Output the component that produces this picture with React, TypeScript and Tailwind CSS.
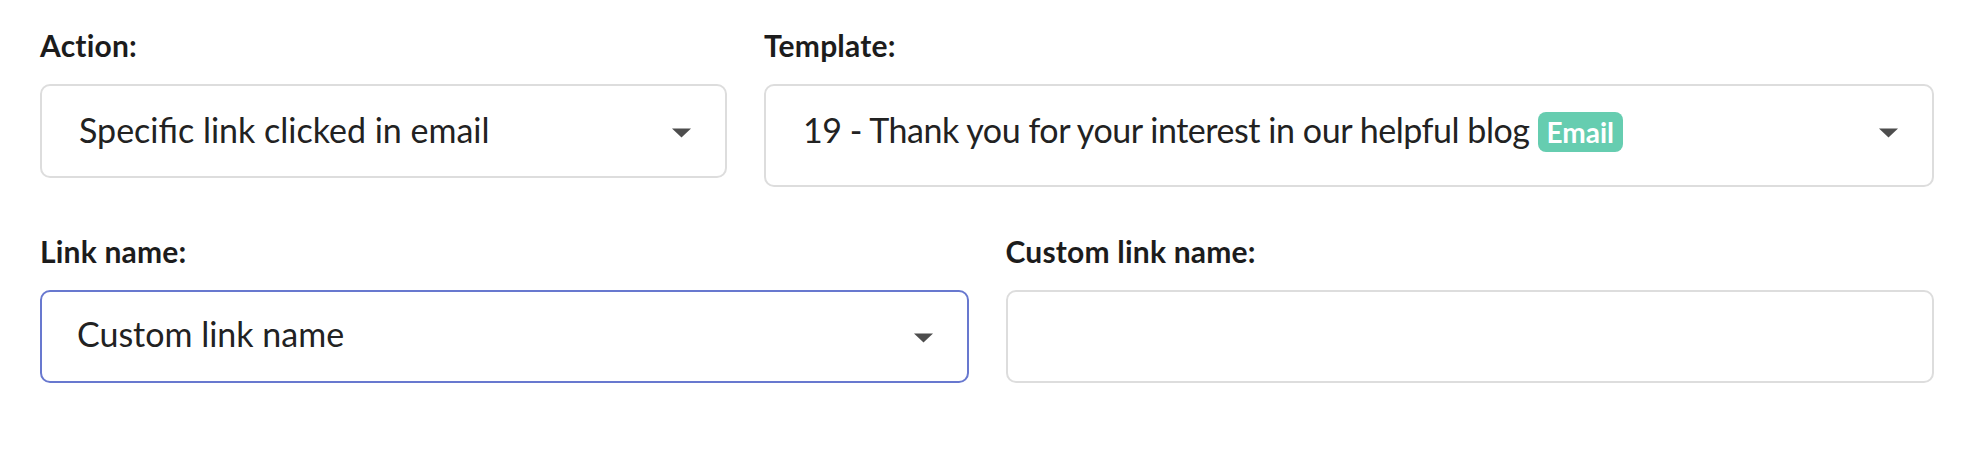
import React from 'react';

const font = { fontFamily: 'Lato, "Open Sans", sans-serif' };

function Caret() {
  return (
    <svg className="w-[19px] h-[10px] shrink-0" viewBox="0 0 19 10">
      <path d="M0 0.5h19L9.5 9.5z" fill="#4d4d4d" />
    </svg>
  );
}

function Label({ children }: { children: React.ReactNode }) {
  return (
    <div className="text-[30px] leading-[36px] font-bold text-[#1c1c1c] mb-[21px] tracking-[0.2px]">{children}</div>
  );
}

export default function App() {
  return (
    <div className="w-[1976px] h-[449px] bg-white pl-10 pr-[42px] pt-[27px]" style={font}>
      <div className="flex items-start gap-[37px]">
        <div className="w-[687px] shrink-0">
          <Label>Action:</Label>
          <div className="flex items-start border-2 border-[#dddddd] rounded-[10px] pl-[37px] pr-[34px] pt-5 pb-[22px]">
            <div className="flex-1 text-[34px] leading-[48px] text-[#222222]">Specific link clicked in email</div>
            <div className="mt-[22px]">
              <Caret />
            </div>
          </div>
        </div>
        <div className="flex-1">
          <Label>Template:</Label>
          <div className="flex items-start border-2 border-[#dddddd] rounded-[10px] pl-[37px] pr-[34px] pt-5 pb-[31px]">
            <div className="flex-1 text-[34px] leading-[48px] text-[#222222]">
              <span className="tracking-[-0.45px]">19 - Thank you for your interest in our helpful blog</span>
              <span className="inline-block ml-[8px] px-[9px] pt-[6px] pb-[6px] text-[28px] leading-[28px] font-bold text-white bg-[#66cdb0] rounded-[8px]">
                Email
              </span>
            </div>
            <div className="mt-[22px]">
              <Caret />
            </div>
          </div>
        </div>
      </div>

      <div className="grid grid-cols-2 gap-[37px] mt-[46px]">
        <div>
          <Label>Link name:</Label>
          <div className="flex items-start border-2 border-[#6878cf] rounded-[10px] pl-[35px] pr-[34px] pt-[18px] pb-[23px]">
            <div className="flex-1 text-[34px] leading-[48px] text-[#222222]">Custom link name</div>
            <div className="mt-[23px]">
              <Caret />
            </div>
          </div>
        </div>
        <div>
          <Label>Custom link name:</Label>
          <div className="border-2 border-[#dddddd] rounded-[10px] h-[93px]" />
        </div>
      </div>
    </div>
  );
}
